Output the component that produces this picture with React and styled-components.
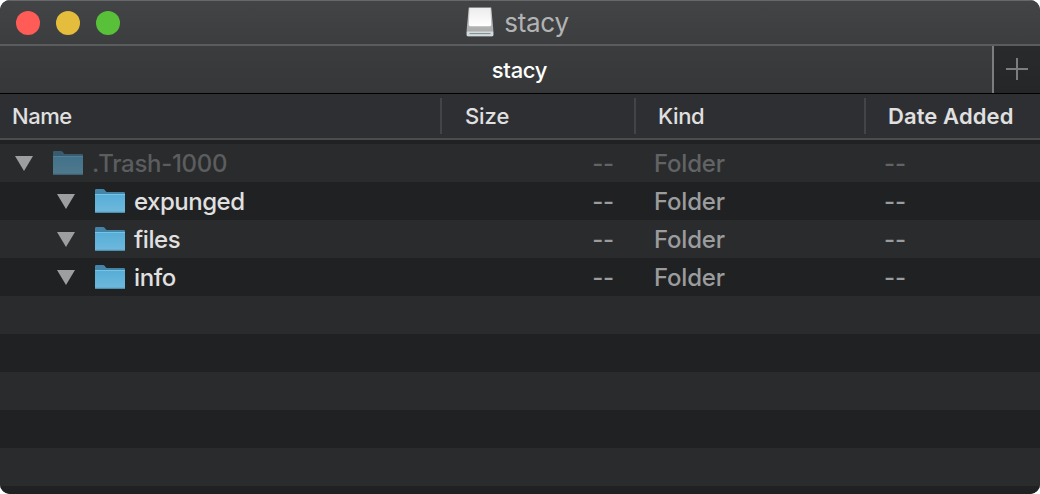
import styled, { createGlobalStyle } from 'styled-components';

const files = [
  { name: '.Trash-1000', depth: 0, dimmed: true, spacing: '-0.3px' },
  { name: 'expunged', depth: 1, spacing: '-0.5px' },
  { name: 'files', depth: 1, spacing: '-0.4px' },
  { name: 'info', depth: 1, spacing: '-0.4px' },
];

const emptyRows = [0, 1, 2, 3, 4, 5];

const DiskIcon = () => (
  <DiskSvg viewBox="0 0 28 30">
    <defs>
      <linearGradient id="diskTop" x1="0" y1="0" x2="0" y2="1">
        <stop offset="0" stopColor="#ececec" />
        <stop offset="1" stopColor="#ffffff" />
      </linearGradient>
      <linearGradient id="diskBody" x1="0" y1="0" x2="0" y2="1">
        <stop offset="0" stopColor="#d0d0d0" />
        <stop offset="1" stopColor="#a2a3a4" />
      </linearGradient>
    </defs>
    <path d="M2.8 0.5H25.2L27.3 22.5V28Q27.3 29.2 26 29.2H2Q0.7 29.2 0.7 28V22.5Z" fill="url(#diskBody)" />
    <path d="M3.6 1H24.4L25.2 17.8Q25.2 19.2 23.8 19.2H4.2Q2.8 19.2 2.8 17.8Z" fill="url(#diskTop)" />
    <path d="M0.7 24.4H27.3V28Q27.3 29.2 26 29.2H2Q0.7 29.2 0.7 28Z" fill="#d3dadc" />
    <path d="M3.5 26.6H24.5" stroke="#7b8a90" strokeWidth="1" />
  </DiskSvg>
);

const FolderIcon = ({ dimmed }) => (
  <FolderSvg viewBox="0 0 30 24" $dimmed={dimmed}>
    <defs>
      <linearGradient id="folderFront" x1="0" y1="0" x2="0" y2="1">
        <stop offset="0" stopColor="#55add7" />
        <stop offset="1" stopColor="#70b9dc" />
      </linearGradient>
    </defs>
    <path d="M0 1.2Q0 0 1.2 0H8Q9 0 9.8 1L11 2.4Q11.5 3 12.5 3H28.8Q30 3 30 4.2V12H0Z" fill="#4484a6" />
    <path d="M0 5H30V22.8Q30 24 28.8 24H1.2Q0 24 0 22.8Z" fill="url(#folderFront)" />
    <path d="M0 5.5H30" stroke="#78c2e4" />
    <path d="M0 22.8H30Q30 24 28.8 24H1.2Q0 24 0 22.8Z" fill="#4f8fae" />
  </FolderSvg>
);

const Triangle = () => (
  <TriangleSvg viewBox="0 0 18 15">
    <path d="M0 0H18L9 15Z" fill="#9d9e9f" />
  </TriangleSvg>
);

const TitleBar = () => (
  <TitleBarWrap>
    <TrafficLights>
      <Light $color="#ff5c57" />
      <Light $color="#e5bd3c" />
      <Light $color="#59c139" />
    </TrafficLights>
    <Title>
      <DiskIcon />
      <TitleText>stacy</TitleText>
    </Title>
  </TitleBarWrap>
);

const TabBar = () => (
  <TabBarWrap>
    <Tab>
      <TabText>stacy</TabText>
    </Tab>
    <NewTab>
      <PlusSvg viewBox="0 0 22 22">
        <path d="M11 0V22M0 11H22" stroke="#7c7d7e" strokeWidth="2" />
      </PlusSvg>
    </NewTab>
  </TabBarWrap>
);

const ListHeader = () => (
  <HeaderWrap>
    <HeaderCell $pad={12} $spacing="-0.5px">Name</HeaderCell>
    <HeaderCell $pad={23} $spacing="-0.1px" $divider>Size</HeaderCell>
    <HeaderCell $pad={22} $spacing="-0.4px" $divider>Kind</HeaderCell>
    <HeaderCell $pad={22} $spacing="0.1px" $weight={600} $divider>Date Added</HeaderCell>
  </HeaderWrap>
);

const FileRow = ({ file }) => (
  <Row $dimmed={file.dimmed}>
    <NameCell $depth={file.depth}>
      <Triangle />
      <FolderIcon dimmed={file.dimmed} />
      <FileName $dimmed={file.dimmed} $spacing={file.spacing}>{file.name}</FileName>
    </NameCell>
    <SizeCell>--</SizeCell>
    <KindCell>Folder</KindCell>
    <DateCell>--</DateCell>
  </Row>
);

const App = () => {
  return (
    <>
      <GlobalStyle />
      <Window>
        <TitleBar />
        <TabBar />
        <ListHeader />
        <List>
          {files.map((file) => (
            <FileRow key={file.name} file={file} />
          ))}
          {emptyRows.map((n) => (
            <Row key={n} />
          ))}
        </List>
      </Window>
    </>
  );
};

const GlobalStyle = createGlobalStyle`
  * {
    box-sizing: border-box;
  }

  body {
    margin: 0;
    background: #ffffff;
    overflow: hidden;
  }
`;

const Window = styled.div`
  width: 1040px;
  height: 494px;
  display: flex;
  flex-direction: column;
  overflow: hidden;
  border-radius: 10px;
  background: #202123;
  font-family: Inter, 'Liberation Sans', sans-serif;
  white-space: nowrap;
`;

const TitleBarWrap = styled.header`
  flex: none;
  height: 46px;
  display: grid;
  grid-template-columns: 1fr auto 1fr;
  align-items: center;
  border-top: 1px solid #66686a;
  border-bottom: 2px solid #5b5c5e;
  background: linear-gradient(#434446, #3c3d3f);
`;

const TrafficLights = styled.div`
  display: flex;
  gap: 16px;
  padding-left: 16px;
`;

const Light = styled.span`
  width: 24px;
  height: 24px;
  border-radius: 50%;
  background: ${({ $color }) => $color};
`;

const Title = styled.div`
  display: flex;
  align-items: center;
  gap: 10px;
  margin-right: 5px;
`;

const DiskSvg = styled.svg`
  width: 28px;
  height: 30px;
  margin-bottom: 2px;
`;

const TitleText = styled.span`
  font-size: 26px;
  line-height: 32px;
  letter-spacing: -0.3px;
  color: #b2b3b4;
`;

const TabBarWrap = styled.div`
  flex: none;
  height: 48px;
  display: flex;
  border-bottom: 1px solid #000000;
  background: linear-gradient(#3b3c3e, #363739);
`;

const Tab = styled.div`
  flex: 1;
  display: flex;
  align-items: center;
  justify-content: center;
  padding-left: 47px;
`;

const TabText = styled.span`
  font-size: 22px;
  font-weight: 550;
  line-height: 28px;
  letter-spacing: -0.3px;
  color: #ffffff;
`;

const NewTab = styled.div`
  width: 48px;
  display: flex;
  align-items: center;
  justify-content: center;
  border-left: 2px solid #7c7d7e;
  background: linear-gradient(#292a2c, #252628);
`;

const PlusSvg = styled.svg`
  width: 22px;
  height: 22px;
  margin-bottom: 2px;
`;

const columns = '440px 194px 230px 1fr';

const HeaderWrap = styled.div`
  flex: none;
  height: 46px;
  display: grid;
  grid-template-columns: ${columns};
  align-items: center;
  border-bottom: 2px solid #4b4c4e;
  background: #2e2f33;
`;

const HeaderCell = styled.div`
  height: 36px;
  padding-left: ${({ $pad }) => $pad}px;
  border-left: ${({ $divider }) => ($divider ? '2px solid #434447' : 'none')};
  font-size: 22px;
  font-weight: ${({ $weight }) => $weight || 550};
  line-height: 37px;
  letter-spacing: ${({ $spacing }) => $spacing};
  color: #e0e0e0;
`;

const List = styled.div`
  flex: 1;
  min-height: 0;
  margin-top: 4px;
  overflow: hidden;
`;

const Row = styled.div`
  height: 38px;
  display: grid;
  grid-template-columns: ${columns};
  align-items: center;
  font-size: 24px;
  font-weight: 450;
  line-height: 38px;
  color: ${({ $dimmed }) => ($dimmed ? '#626365' : '#9b9c9d')};
  background: #202123;

  &:nth-child(odd) {
    background: #2a2b2d;
  }
`;

const NameCell = styled.div`
  display: flex;
  align-items: center;
  height: 38px;
  padding-left: ${({ $depth }) => 15 + $depth * 42}px;
`;

const TriangleSvg = styled.svg`
  width: 18px;
  height: 15px;
  margin-right: 20px;
`;

const FolderSvg = styled.svg`
  width: 30px;
  height: 24px;
  margin-right: 9px;
  opacity: ${({ $dimmed }) => ($dimmed ? 0.55 : 1)};
`;

const FileName = styled.span`
  padding-top: 2px;
  letter-spacing: ${({ $spacing }) => $spacing};
  color: ${({ $dimmed }) => ($dimmed ? '#5c5d5f' : '#e0e0e0')};
`;

const DetailCell = styled.div`
  height: 38px;
  padding-top: 1px;
  letter-spacing: -0.2px;
`;

const SizeCell = styled(DetailCell)`
  padding-right: 20px;
  text-align: right;
`;

const KindCell = styled(DetailCell)`
  padding-left: 20px;
`;

const DateCell = styled(DetailCell)`
  padding-left: 20px;
`;

export default App;
